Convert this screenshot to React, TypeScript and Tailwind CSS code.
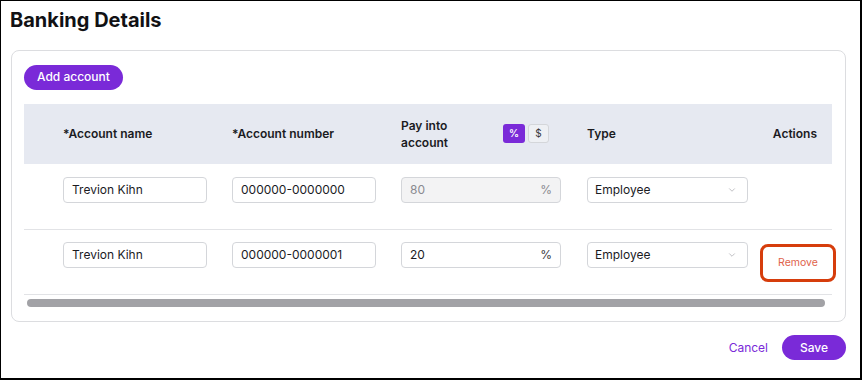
import { ChevronDown } from "lucide-react";

const font = { fontFamily: "Inter, 'Noto Sans', sans-serif" };

function TextInput({ value, width }: { value: string; width: string }) {
  return (
    <div className={`${width} h-[26px] flex items-center px-[8px] border border-[#d4d6da] rounded-[4px] text-[12px] text-[#1b1b1f] bg-white`}>
      {value}
    </div>
  );
}

function PctInput({ value, disabled }: { value: string; disabled?: boolean }) {
  return (
    <div
      className={`w-[160px] h-[26px] flex items-center justify-between px-[8px] border border-[#d4d6da] rounded-[4px] text-[12px] ${
        disabled ? "bg-[#f3f3f4] text-[#8a8a90]" : "bg-white text-[#1b1b1f]"
      }`}
    >
      <span>{value}</span>
      <span className={disabled ? "text-[#8a8a90]" : "text-[#3a3a40]"}>%</span>
    </div>
  );
}

function TypeSelect() {
  return (
    <div className="w-[161px] h-[26px] flex items-center justify-between pl-[7px] pr-[10px] border border-[#d4d6da] rounded-[4px] text-[12px] text-[#1b1b1f] bg-white">
      <span>Employee</span>
      <ChevronDown size={10} strokeWidth={1.5} className="text-[#9a9aa0]" />
    </div>
  );
}

function Row({ num, pay, disabled, remove, h, pt }: { num: string; pay: string; disabled?: boolean; remove?: boolean; h: string; pt: string }) {
  return (
    <div className={`flex items-start ${h} ${pt} border-b border-[#e2e3e6]`}>
      <div className="w-[39px] shrink-0" />
      <div className="w-[169px] shrink-0"><TextInput value="Trevion Kihn" width="w-[144px]" /></div>
      <div className="w-[169px] shrink-0"><TextInput value={num} width="w-[144px]" /></div>
      <div className="w-[186px] shrink-0"><PctInput value={pay} disabled={disabled} /></div>
      <div className="w-[173px] shrink-0"><TypeSelect /></div>
      {remove && (
        <button className="mt-[2px] w-[76px] h-[38px] shrink-0 border-[3px] border-[#d63d0c] rounded-[8px] bg-white text-[10.5px] text-[#e0624a]">
          Remove
        </button>
      )}
    </div>
  );
}

export default function App() {
  return (
    <div
      style={font}
      className="w-[862px] h-[380px] bg-white border-black border-l border-t border-r-2 border-b-2 overflow-hidden"
    >
      <h1 className="pl-[9px] pt-[6px] text-[20px] leading-[26px] font-bold text-[#111114]">Banking Details</h1>

      <div className="ml-[10px] mt-[17px] w-[835px] h-[272px] border border-[#dcdde0] rounded-[8px] pl-[12px] pr-[12px] pt-[12px]">
        <button className="h-[25px] px-[13px] rounded-full bg-[#7a2ad8] text-white text-[12px] font-medium">
          Add account
        </button>

        <div className="mt-[14px] w-[808px]">
          <div className="flex items-center h-[60px] bg-[#e6e9f1] text-[12px] font-semibold text-[#1b1b1f]">
            <div className="w-[39px] shrink-0" />
            <div className="w-[169px] shrink-0">*Account name</div>
            <div className="w-[169px] shrink-0">*Account number</div>
            <div className="w-[186px] shrink-0 flex items-center">
              <div className="w-[102px] leading-[17px]">
                Pay into
                <br />
                account
              </div>
              <div className="flex items-center gap-[3px]">
                <span className="w-[22px] h-[19px] flex items-center justify-center rounded-[3px] bg-[#7a2ad8] text-white text-[10px]">%</span>
                <span className="w-[21px] h-[19px] flex items-center justify-center rounded-[3px] border border-[#d4d6da] bg-[#eef0f4] text-[#3a3a40] text-[10px] font-normal">$</span>
              </div>
            </div>
            <div className="w-[173px] shrink-0">Type</div>
            <div className="flex-1 text-right pr-[15px]">Actions</div>
          </div>

          <Row num="000000-0000000" pay="80" disabled h="h-[66px]" pt="pt-[13px]" />
          <Row num="000000-0000001" pay="20" remove h="h-[65px]" pt="pt-[12px]" />

          <div className="mt-[4px] ml-[3px] w-[798px] h-[8px] rounded-full bg-[#a2a2a6]" />
        </div>
      </div>

      <div className="flex items-center justify-end gap-[14px] pr-[14px] mt-[13px]">
        <button className="text-[12px] text-[#7a2ad8]">Cancel</button>
        <button className="w-[64px] h-[25px] rounded-full bg-[#7a2ad8] text-white text-[12px] font-medium">Save</button>
      </div>
    </div>
  );
}
